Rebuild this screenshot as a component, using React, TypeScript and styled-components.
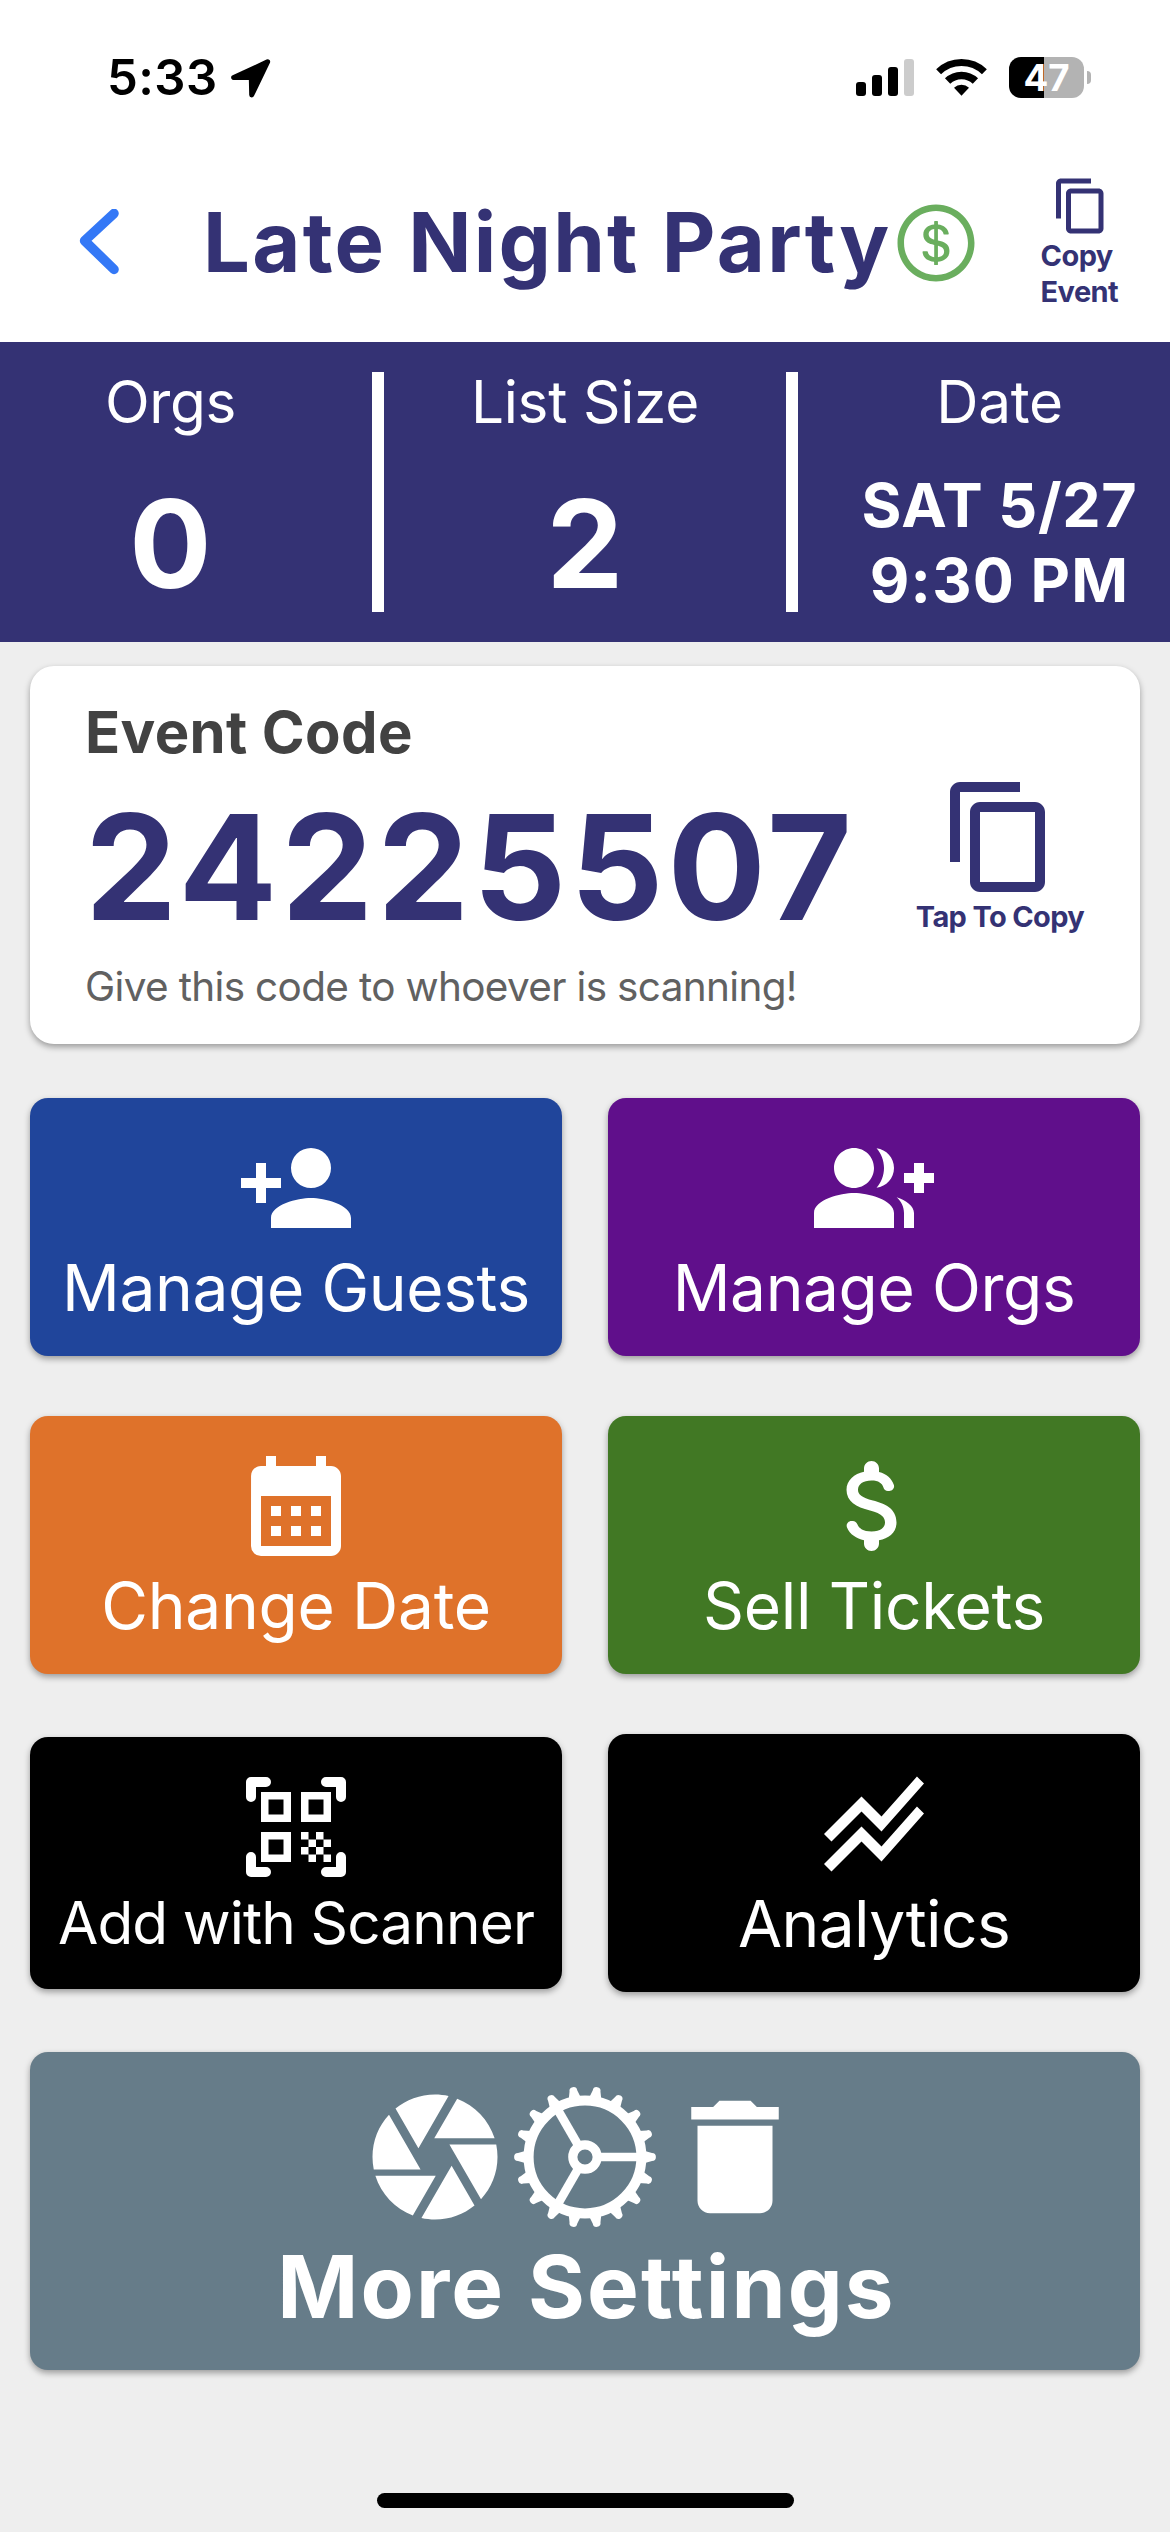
import React from "react";
import styled, { createGlobalStyle } from "styled-components";
import {
  MdCalendarMonth,
  MdContentCopy,
  MdDelete,
  MdStackedLineChart,
} from "react-icons/md";
import { AiOutlineDollarCircle } from "react-icons/ai";

const NAVY = "#343274";

const GlobalStyle = createGlobalStyle`
  *, *::before, *::after { box-sizing: border-box; }
  body {
    margin: 0;
    background: #eeeeee;
    font-family: Inter, Roboto, sans-serif;
  }
  svg { display: block; flex: none; }
`;

const Screen = styled.main`
  width: 1170px;
  height: 2532px;
  overflow: hidden;
  background: #eeeeee;
`;

/* ---------- status bar ---------- */

const StatusBar = styled.div`
  display: flex;
  align-items: center;
  height: 155px;
  padding: 0 79px 0 107px;
  background: #fff;
`;

const Clock = styled.span`
  margin-right: 13px;
  color: #000;
  font-size: 49px;
  font-weight: 600;
  line-height: 60px;
  letter-spacing: 0.46px;
`;

const StatusIcons = styled.div`
  display: flex;
  align-items: center;
  gap: 22px;
  margin-left: auto;
`;

const Signal = styled.div`
  display: flex;
  align-items: flex-end;
  gap: 6px;
  height: 37px;
`;

const SignalBar = styled.i<{ $h: number; $off?: boolean }>`
  width: 10px;
  height: ${(p) => p.$h}px;
  border-radius: 3px;
  background: ${(p) => (p.$off ? "#cccccc" : "#000")};
`;

const BatteryWrap = styled.div`
  display: flex;
  align-items: center;
  gap: 3px;
`;

const Battery = styled.div`
  display: flex;
  align-items: center;
  justify-content: center;
  width: 75px;
  height: 41px;
  border-radius: 12px;
  background: linear-gradient(90deg, #000 35px, #b3b3b3 35px);
  color: #fff;
  font-size: 36.7px;
  font-weight: 700;
  line-height: 41px;
`;

const BatteryTip = styled.i`
  width: 4px;
  height: 13px;
  border-radius: 0 5px 5px 0;
  background: #b3b3b3;
`;

/* ---------- header ---------- */

const Header = styled.header`
  display: flex;
  align-items: flex-start;
  height: 187px;
  padding: 21px 0 0 79px;
  background: #fff;
  color: ${NAVY};
`;

const TitleRow = styled.div`
  display: flex;
  align-items: center;
  height: 131px;
`;

const Title = styled.h1`
  width: 688.5px;
  margin: 0 0 0 84px;
  font-size: 83px;
  font-weight: 700;
  line-height: 100px;
  letter-spacing: 2.27px;
  white-space: nowrap;
`;

const DollarMark = styled(AiOutlineDollarCircle)`
  width: 88px;
  height: 88px;
  margin-top: 3px;
  color: #6aae5e;
`;

const CopyEvent = styled.button`
  display: block;
  margin: 0 0 0 61px;
  padding: 0;
  border: 0;
  background: none;
  color: inherit;
  font: 700 29px/36px Inter, Roboto, sans-serif;
  letter-spacing: -0.55px;
  text-align: left;

  svg {
    width: 60px;
    height: 60px;
    margin: 0 0 2px 10.5px;
  }
  span { display: block; }
`;

/* ---------- stats ---------- */

const Stats = styled.section`
  display: grid;
  grid-template-columns: 341px 12.6px 1fr 12.6px 341px;
  column-gap: 30.6px;
  height: 300px;
  background: ${NAVY};
  color: #fff;
  text-align: center;
  white-space: nowrap;
`;

const Divider = styled.div`
  margin: 30px 0;
  background: #fff;
`;

const Stat = styled.div`
  padding-top: 25px;
`;

const StatLabel = styled.div`
  margin-bottom: 31px;
  font-size: 58.5px;
  line-height: 70px;
  letter-spacing: -0.35px;
`;

const StatNumber = styled.div`
  font-size: 122px;
  font-weight: 700;
  line-height: 151px;
`;

const StatDate = styled.div<{ $spacing: number }>`
  font-size: 61px;
  font-weight: 700;
  line-height: 75px;
  letter-spacing: ${(p) => p.$spacing}px;
`;

/* ---------- event code ---------- */

const CodeCard = styled.section`
  display: flex;
  justify-content: space-between;
  height: 378px;
  margin: 24px 30px 54px;
  padding: 31px 50px 0 55px;
  border-radius: 24px;
  background: #fff;
  box-shadow: 0 3px 6px rgba(0, 0, 0, 0.35);
`;

const CodeTitle = styled.h2`
  margin: 0;
  color: #424242;
  font-size: 58px;
  font-weight: 700;
  line-height: 70px;
  letter-spacing: 0.37px;
`;

const Code = styled.div`
  margin: 12px 0 7px;
  color: ${NAVY};
  font-size: 146px;
  font-weight: 700;
  line-height: 176px;
  letter-spacing: 3.92px;
`;

const CodeHint = styled.p`
  margin: 0;
  color: #616161;
  font-size: 40.5px;
  line-height: 50px;
  letter-spacing: -0.67px;
  white-space: nowrap;
`;

const TapToCopy = styled.button`
  display: flex;
  flex-direction: column;
  align-items: center;
  align-self: flex-start;
  gap: 1px;
  width: 180px;
  margin-top: 80px;
  padding: 0;
  border: 0;
  background: none;
  color: ${NAVY};
  font: 700 29px/37px Inter, Roboto, sans-serif;
  letter-spacing: -0.64px;
  white-space: nowrap;

  svg {
    width: 120px;
    height: 120px;
  }
`;

/* ---------- action tiles ---------- */

const Tiles = styled.section`
  display: grid;
  grid-template-columns: 1fr 1fr;
  align-items: center;
  gap: 60px 46px;
  margin: 0 30px 60px;
`;

const Tile = styled.button<{ $color: string; $small?: boolean; $spacing: number }>`
  display: flex;
  flex-direction: column;
  align-items: center;
  height: ${(p) => (p.$small ? 252 : 258)}px;
  padding: 30px 0 0;
  border: 0;
  border-radius: 18px;
  background: ${(p) => p.$color};
  box-shadow: 0 3px 6px rgba(0, 0, 0, 0.35);
  color: #fff;
  font-family: inherit;
  font-size: ${(p) => (p.$small ? 58.5 : 64)}px;
  line-height: ${(p) => (p.$small ? 72 : 79)}px;
  letter-spacing: ${(p) => p.$spacing}px;
  white-space: nowrap;

  svg {
    width: 120px;
    height: 120px;
  }
`;

const MoreTile = styled.button`
  display: flex;
  flex-direction: column;
  align-items: center;
  width: 1110px;
  height: 318px;
  margin: 0 30px 123px;
  padding: 30px 0 0;
  border: 0;
  border-radius: 18px;
  background: #667c89;
  box-shadow: 0 3px 6px rgba(0, 0, 0, 0.35);
  color: #fff;
`;

const MoreIcons = styled.div`
  display: flex;

  svg {
    width: 150px;
    height: 150px;
  }
`;

const MoreLabel = styled.span`
  padding-left: 3px;
  font: 700 87px/110px Inter, Roboto, sans-serif;
  letter-spacing: 2.1px;
`;

const HomeBar = styled.div`
  width: 417px;
  height: 15px;
  margin: 0 auto;
  border-radius: 8px;
  background: #000;
`;

/* ---------- icons ---------- */

const LocationArrow = () => (
  <svg width="40" height="40" viewBox="0 0 40 40">
    <path
      d="M36.6 3.8 2.7 19.6H20.3L20.7 37Z"
      fill="#000"
      stroke="#000"
      strokeWidth="5"
      strokeLinejoin="round"
    />
  </svg>
);

const Wifi = () => (
  <svg width="51" height="37" viewBox="0 0 51 37">
    <g fill="none" stroke="#000">
      <path d="M2.6 12.8A33 33 0 0 1 48.4 12.8" strokeWidth="7" />
      <path d="M11.6 22.1A20 20 0 0 1 39.4 22.1" strokeWidth="7.6" />
    </g>
    <path d="M25.5 36.8 18 28.7A10.8 10.8 0 0 1 33 28.7Z" />
  </svg>
);

const BackChevron = () => (
  <svg width="40" height="66" viewBox="0 0 40 66">
    <path
      d="M35 4.4 5.6 31.8 35 60.4"
      fill="none"
      stroke="#3478f6"
      strokeWidth="9.6"
      strokeLinecap="round"
      strokeLinejoin="round"
    />
  </svg>
);

const Glyph = ({ d }: { d: string }) => (
  <svg viewBox="0 0 24 24" fill="currentColor">
    <path d={d} />
  </svg>
);

const PERSON_ADD =
  "M15 14c-2.67 0-8 1.33-8 4v2h16v-2c0-2.67-5.33-4-8-4M6 10V7H4v3H1v2h3v3h2v-3h3v-2M15 12a4 4 0 0 0 4-4 4 4 0 0 0-4-4 4 4 0 0 0-4 4 4 4 0 0 0 4 4Z";
const GROUP_ADD =
  "M22 9V7h-2v2h-2v2h2v2h2v-2h2V9zM8 12c2.21 0 4-1.79 4-4s-1.79-4-4-4-4 1.79-4 4 1.79 4 4 4zM8 13c-2.67 0-8 1.34-8 4v3h16v-3c0-2.66-5.33-4-8-4zM12.51 4.05C13.43 5.11 14 6.49 14 8s-.57 2.89-1.49 3.95C14.47 11.7 16 10.04 16 8s-1.53-3.7-3.49-3.95zM16.53 13.83C17.42 14.66 18 15.7 18 17v3h2v-3c0-1.45-1.59-2.51-3.47-3.17z";
const MONEY =
  "M11.8 10.9c-2.27-.59-3-1.2-3-2.15 0-1.09 1.01-1.85 2.7-1.85 1.42 0 2.13.54 2.39 1.4.12.4.45.7.87.7h.3c.66 0 1.13-.65.9-1.27-.42-1.18-1.4-2.16-2.96-2.54V4.5c0-.83-.67-1.5-1.5-1.5S10 3.67 10 4.5v.66c-1.94.42-3.5 1.68-3.5 3.61 0 2.31 1.91 3.46 4.7 4.13 2.5.6 3 1.48 3 2.41 0 .69-.49 1.79-2.7 1.79-1.65 0-2.5-.59-2.83-1.43-.15-.39-.49-.67-.9-.67h-.28c-.67 0-1.14.68-.89 1.3.57 1.39 1.9 2.21 3.4 2.53v.67c0 .83.67 1.5 1.5 1.5s1.5-.67 1.5-1.5v-.65c1.95-.37 3.5-1.5 3.5-3.55 0-2.84-2.43-3.81-4.7-4.4z";
const IRIS =
  "M13.73 15 9.83 21.76C10.53 21.91 11.25 22 12 22 14.4 22 16.6 21.15 18.32 19.75L14.66 13.4M2.46 15C3.38 17.92 5.61 20.26 8.45 21.34L12.12 15M8.54 12 4.64 5.25C3 7 2 9.39 2 12 2 12.68 2.07 13.35 2.2 14H9.69M21.8 10H14.31L14.6 10.5 19.36 18.75C21 16.97 22 14.6 22 12 22 11.31 21.93 10.64 21.8 10M21.54 9C20.62 6.07 18.39 3.74 15.55 2.66L11.88 9M9.4 10.5 14.17 2.24C13.47 2.09 12.75 2 12 2 9.6 2 7.4 2.84 5.68 4.25L9.34 10.6 9.4 10.5Z";

const QrScan = () => (
  <svg viewBox="0 0 24 24" fill="currentColor">
    <path
      d="M3 6V3H6M18 3h3v3M21 18v3h-3M6 21H3v-3"
      fill="none"
      stroke="currentColor"
      strokeWidth="2"
      strokeLinecap="round"
      strokeLinejoin="round"
    />
    <path d="M9.5 6.5v3h-3v-3h3M11 5H5v6h6V5zm-1.5 9.5v3h-3v-3h3M11 13H5v6h6v-6zm6.5-6.5v3h-3v-3h3M19 5h-6v6h6V5zm-6 8h1.5v1.5H13V13zm1.5 1.5H16V16h-1.5v-1.5zM16 13h1.5v1.5H16V13zm-3 3h1.5v1.5H13V16zm1.5 1.5H16V19h-1.5v-1.5zM16 16h1.5v1.5H16V16zm1.5-1.5H19V16h-1.5v-1.5zm0 3H19V19h-1.5v-1.5z" />
  </svg>
);

const TEETH = Array.from({ length: 18 }, (_, i) => i * 20);
const SPOKES = [0, 120, 240];

const Cog = () => (
  <svg viewBox="-75 -75 150 150" fill="none" stroke="currentColor">
    <circle r="56.4" strokeWidth="10" />
    <circle r="12.2" strokeWidth="9.2" />
    {SPOKES.map((a) => (
      <path key={a} d="M15 0H54" strokeWidth="8.7" transform={`rotate(${a})`} />
    ))}
    {TEETH.map((a) => (
      <path
        key={a}
        d="M59 -6.2 67 -3.9A3.9 3.9 0 0 1 67 3.9L59 6.2Z"
        fill="currentColor"
        stroke="none"
        transform={`rotate(${a})`}
      />
    ))}
  </svg>
);

/* ---------- page ---------- */

export default function App() {
  return (
    <Screen>
      <GlobalStyle />
      <StatusBar>
        <Clock>5:33</Clock>
        <LocationArrow />
        <StatusIcons>
          <Signal>
            <SignalBar $h={14} />
            <SignalBar $h={21} />
            <SignalBar $h={29} />
            <SignalBar $h={37} $off />
          </Signal>
          <Wifi />
          <BatteryWrap>
            <Battery>47</Battery>
            <BatteryTip />
          </BatteryWrap>
        </StatusIcons>
      </StatusBar>

      <Header>
        <TitleRow>
          <BackChevron />
          <Title>Late Night Party</Title>
          <DollarMark />
        </TitleRow>
        <CopyEvent>
          <MdContentCopy />
          <span>Copy</span>
          <span>Event</span>
        </CopyEvent>
      </Header>

      <Stats>
        <Stat>
          <StatLabel>Orgs</StatLabel>
          <StatNumber>0</StatNumber>
        </Stat>
        <Divider />
        <Stat>
          <StatLabel>List Size</StatLabel>
          <StatNumber>2</StatNumber>
        </Stat>
        <Divider />
        <Stat>
          <StatLabel>Date</StatLabel>
          <StatDate $spacing={0.62}>SAT 5/27</StatDate>
          <StatDate $spacing={1.14}>9:30 PM</StatDate>
        </Stat>
      </Stats>

      <CodeCard>
        <div>
          <CodeTitle>Event Code</CodeTitle>
          <Code>24225507</Code>
          <CodeHint>Give this code to whoever is scanning!</CodeHint>
        </div>
        <TapToCopy>
          <MdContentCopy />
          Tap To Copy
        </TapToCopy>
      </CodeCard>

      <Tiles>
        <Tile $color="#20459b" $spacing={-0.39}>
          <Glyph d={PERSON_ADD} />
          Manage Guests
        </Tile>
        <Tile $color="#600f8b" $spacing={-0.41}>
          <Glyph d={GROUP_ADD} />
          Manage Orgs
        </Tile>
        <Tile $color="#df722a" $spacing={-0.3}>
          <MdCalendarMonth />
          Change Date
        </Tile>
        <Tile $color="#417824" $spacing={-0.32}>
          <Glyph d={MONEY} />
          Sell Tickets
        </Tile>
        <Tile $color="#000" $small $spacing={-0.89}>
          <QrScan />
          Add with Scanner
        </Tile>
        <Tile $color="#000" $spacing={-0.58}>
          <MdStackedLineChart />
          Analytics
        </Tile>
      </Tiles>

      <MoreTile>
        <MoreIcons>
          <Glyph d={IRIS} />
          <Cog />
          <MdDelete />
        </MoreIcons>
        <MoreLabel>More Settings</MoreLabel>
      </MoreTile>

      <HomeBar />
    </Screen>
  );
}
